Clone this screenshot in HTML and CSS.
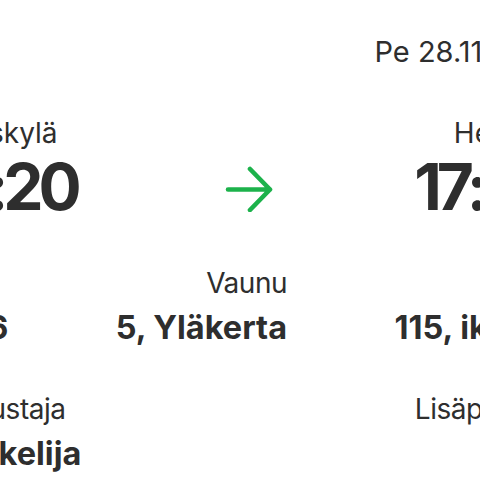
FILE: index.html
```html
<!DOCTYPE html>
<html lang="fi">
<head>
<meta charset="utf-8">
<title>Lippu</title>
<link rel="stylesheet" href="styles.css">
</head>
<body>
<main class="viewport">
  <section class="ticket">
    <div class="date">Pe 28.11.2025</div>
    <div class="route">
      <div class="stop">
        <div class="station">Jyväskylä</div>
        <div class="time">14:20</div>
      </div>
      <svg class="arrow" width="48" height="46" viewBox="0 0 48 46" aria-hidden="true">
        <path d="M3 23.5 H45 M25 3 L45 23.5 L25 44" fill="none" stroke="#1cb24b" stroke-width="4.6" stroke-linecap="round" stroke-linejoin="round"/>
      </svg>
      <div class="stop stop-end">
        <div class="station">Helsinki</div>
        <div class="time">17:49</div>
      </div>
    </div>
    <div class="details">
      <div class="field">
        <div class="label">Juna</div>
        <div class="value">IC 26</div>
      </div>
      <div class="field field-end">
        <div class="label">Vaunu</div>
        <div class="value">5, Yläkerta</div>
      </div>
      <div class="field field-end">
        <div class="label">Paikka</div>
        <div class="value">115, ikkuna</div>
      </div>
    </div>
    <div class="details details-two">
      <div class="field">
        <div class="label">Matkustaja</div>
        <div class="value">Opiskelija</div>
      </div>
      <div class="field field-end">
        <div class="label">Lisäpalvelut</div>
        <div class="value">–</div>
      </div>
    </div>
  </section>
</main>
</body>
</html>
```
FILE: styles.css
```css
html, body {
  margin: 0;
  padding: 0;
  background: #ffffff;
}

body {
  font-family: Inter, "Noto Sans", "Liberation Sans", sans-serif;
  color: #2e2e2e;
  overflow: hidden;
}

.viewport {
  width: 480px;
  height: 480px;
  overflow: hidden;
}

.ticket {
  width: 640px;
  margin-left: -74px;
  padding-top: 34px;
  display: flex;
  flex-direction: column;
}

.date {
  font-size: 29px;
  line-height: 36px;
  text-align: right;
  padding-right: 4px;
}

.route {
  margin-top: 46px;
  display: grid;
  grid-template-columns: 1fr auto 1fr;
  align-items: end;
}

.stop {
  display: flex;
  flex-direction: column;
  gap: 2px;
}

.stop-end {
  align-items: flex-end;
  padding-right: 8px;
}

.station {
  font-size: 28px;
  line-height: 34px;
}

.time {
  font-size: 64px;
  line-height: 70px;
  font-weight: 700;
  letter-spacing: -5px;
}

.arrow {
  display: block;
  margin: 0 0 10px 6px;
}

.details {
  margin-top: 44px;
  display: grid;
  grid-template-columns: 175px 186px 279px;
}

.details-two {
  margin-top: 44px;
  grid-template-columns: 1fr 1fr;
}

.field {
  display: flex;
  flex-direction: column;
  gap: 8px;
}

.field-end {
  align-items: flex-end;
}

.label {
  font-size: 28px;
  line-height: 34px;
  letter-spacing: -0.5px;
}

.value {
  font-size: 32.5px;
  line-height: 40px;
  font-weight: 700;
}
```
